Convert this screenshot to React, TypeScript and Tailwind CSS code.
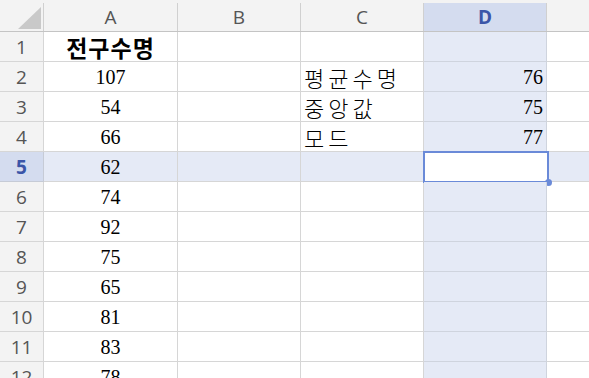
import React from "react";

const cols = [
  { w: 134, label: "A" },
  { w: 123, label: "B" },
  { w: 123, label: "C" },
  { w: 123, label: "D" },
];

const aVals = ["전구수명", "107", "54", "66", "62", "74", "92", "75", "65", "81", "83", "78"];
const cVals: Record<number, string> = { 2: "평균수명", 3: "중앙값", 4: "모드" };
const dVals: Record<number, string> = { 2: "76", 3: "75", 4: "77" };

const ui = { fontFamily: '"Open Sans", "Noto Sans", sans-serif' };
const serif = { fontFamily: '"Liberation Serif", "Noto Sans CJK KR", serif' };
const kr = { fontFamily: '"Noto Sans CJK KR", sans-serif' };

export default function App() {
  const rows = Array.from({ length: 12 }, (_, i) => i + 1);
  return (
    <div className="w-[589px] h-[378px] overflow-hidden bg-white">
      {/* header row */}
      <div className="flex h-[32px] bg-[#f3f3f3] border-b border-[#c4c4c4]">
        <div className="w-[44px] shrink-0 pt-[3px]">
          <div className="h-full border-r border-[#d0d0d0] relative">
            <svg className="absolute left-[18px] top-[4px]" width="24" height="22" viewBox="0 0 24 22">
              <polygon points="23,0 23,22 0,22" fill="#c9c9c9" />
            </svg>
          </div>
        </div>
        {cols.map((c) => (
          <div key={c.label} className="shrink-0 pt-[3px]" style={{ width: c.w }}>
            <div
              className={
                "h-full border-r border-[#d0d0d0] flex items-center justify-center text-[19px] " +
                (c.label === "D" ? "bg-[#d4dcef] text-[#3b55a8] font-bold" : "text-[#555555]")
              }
              style={ui}
            >
              {c.label}
            </div>
          </div>
        ))}
        <div className="flex-1" />
      </div>
      {rows.map((r) => {
        const sel = r === 5;
        return (
          <div key={r} className={"flex h-[30px] " + (sel ? "bg-[#e5eaf6]" : "")}>
            <div
              className={
                "w-[44px] shrink-0 border-r border-b flex items-center justify-center text-[19px] leading-[24px] " +
                (sel
                  ? "bg-[#d4dcef] text-[#3b55a8] font-bold border-[#c6cbd6]"
                  : "bg-[#f3f3f3] text-[#555555] border-[#d6d6d6]")
              }
              style={ui}
            >
              {r}
            </div>
            <div
              className={
                "w-[134px] shrink-0 border-r border-b border-[#d6d6d6] flex items-center justify-center text-black leading-[26px] " +
                (r === 1 ? "font-bold text-[23px] tracking-[1px]" : "text-[20px]")
              }
              style={r === 1 ? kr : serif}
            >
              {aVals[r - 1]}
            </div>
            <div className="w-[123px] shrink-0 border-r border-b border-[#d6d6d6]" />
            <div
              className="w-[123px] shrink-0 border-r border-b border-[#d6d6d6] flex items-center pl-[3px] text-[22px] leading-[26px] tracking-[4px] font-light text-black whitespace-nowrap"
              style={kr}
            >
              {cVals[r] ?? ""}
            </div>
            <div
              className="w-[123px] shrink-0 border-r border-b border-[#cfd4de] bg-[#e5eaf6] relative flex items-center justify-end pr-[3px] text-[20px] leading-[26px] text-black"
              style={serif}
            >
              {dVals[r] ?? ""}
              {sel && (
                <div className="absolute left-[-1px] top-[-1px] w-[126px] h-[32px] border-2 border-[#6a8ad8] bg-white">
                  <div className="absolute right-[-5px] bottom-[-5px] w-[7px] h-[7px] rounded-full bg-[#6a8ad8]" />
                </div>
              )}
            </div>
            <div className="flex-1 border-b border-[#d6d6d6]" />
          </div>
        );
      })}
    </div>
  );
}
